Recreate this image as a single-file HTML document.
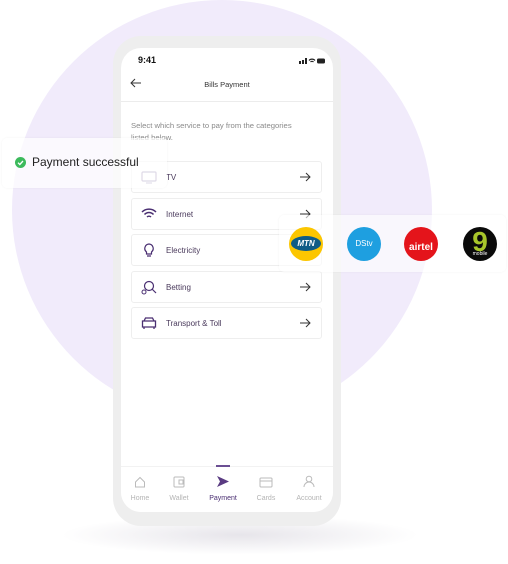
<!DOCTYPE html>
<html><head><style>
*{margin:0;padding:0;box-sizing:border-box}
body{width:508px;height:564px;background:#fff;position:relative;overflow:hidden;font-family:"Liberation Sans",sans-serif}
.abs{position:absolute}
.circle{left:12px;top:0;width:420px;height:420px;border-radius:50%;background:#f1ebfb}
.shadow{left:60px;top:515px;width:360px;height:40px;border-radius:50%;background:radial-gradient(ellipse,rgba(120,110,140,.18),rgba(255,255,255,0) 70%)}
.frame{left:113px;top:36px;width:228px;height:490px;border-radius:28px;background:#eeeeee}
.screen{left:121px;top:48px;width:212px;height:464px;border-radius:20px;background:#fff;overflow:hidden}
.row{position:absolute;left:10px;width:191px;height:32px;border:1px solid #eeeeee;border-radius:3px;background:#fff;font-size:8px;color:#4a3a5c}
.row span{position:absolute;left:34px;top:11px}
.row .ar{position:absolute;right:10px;top:9px}
.row .ic{position:absolute;left:9px;top:8px}
.nav{position:absolute;left:0;top:418px;width:212px;height:46px;background:#fff;border-top:1px solid #f2f2f2}
.nv{position:absolute;top:28px;font-size:7px;color:#b4b4b4;width:40px;text-align:center}
</style></head><body>
<div class="abs circle"></div>
<div class="abs shadow"></div>
<div class="abs frame"></div>
<div class="abs screen">
 <div class="abs" style="left:17px;top:7px;font-size:9px;font-weight:bold;color:#111">9:41</div>
 <svg class="abs" style="left:178px;top:9px" width="26" height="8"><rect x="0" y="4" width="2" height="3" fill="#222"/><rect x="3" y="3" width="2" height="4" fill="#222"/><rect x="6" y="1" width="2" height="6" fill="#222"/><path d="M10 3.5a4 4 0 0 1 6 0M11.5 5a2 2 0 0 1 3 0" stroke="#222" fill="none" stroke-width="1.2"/><rect x="18" y="1.5" width="8" height="5" rx="1.5" fill="#222"/></svg>
 <svg class="abs" style="left:9px;top:30px" width="12" height="10"><path d="M11 5H1M5 1L1 5l4 4" stroke="#333" fill="none" stroke-width="1"/></svg>
 <div class="abs" style="left:0;width:212px;top:32px;text-align:center;font-size:7.5px;color:#333">Bills Payment</div>
 <div class="abs" style="left:0;top:53px;width:212px;height:1px;background:#ececec"></div>
 <div class="abs" style="left:10px;top:72px;width:172px;font-size:7.7px;line-height:11.5px;color:#8a8a8a">Select which service to pay from the categories listed below.</div>
 <div class="row" style="top:113px"><svg class="ic" width="16" height="14"><rect x="1" y="2" width="14" height="9" rx="1" stroke="#8f80b0" fill="none" stroke-width="1.2"/><path d="M5 13h6" stroke="#8f80b0"/></svg><span>TV</span><svg class="ar" width="12" height="12"><path d="M1 6h10M7 2l4 4-4 4" stroke="#333" fill="none"/></svg></div>
 <div class="row" style="top:150px"><svg class="ic" width="16" height="14"><path d="M1 5a10 10 0 0 1 14 0M3.5 7.5a6 6 0 0 1 9 0M6 10a3 3 0 0 1 4 0" stroke="#4a2f72" fill="none" stroke-width="1.5"/></svg><span>Internet</span><svg class="ar" width="12" height="12"><path d="M1 6h10M7 2l4 4-4 4" stroke="#333" fill="none"/></svg></div>
 <div class="row" style="top:186px"><svg class="ic" width="16" height="14"><path d="M8 1a4.5 4.5 0 0 0-2.5 8v2h5V9A4.5 4.5 0 0 0 8 1zM6 13h4" stroke="#4a2f72" fill="none" stroke-width="1.2"/></svg><span>Electricity</span><svg class="ar" width="12" height="12"><path d="M1 6h10M7 2l4 4-4 4" stroke="#333" fill="none"/></svg></div>
 <div class="row" style="top:223px"><svg class="ic" width="16" height="16"><circle cx="8" cy="6" r="4.5" stroke="#4a2f72" fill="none" stroke-width="1.2"/><path d="M11 9l4 4" stroke="#4a2f72" stroke-width="1.2"/><circle cx="3" cy="12" r="2" stroke="#4a2f72" fill="none"/></svg><span>Betting</span><svg class="ar" width="12" height="12"><path d="M1 6h10M7 2l4 4-4 4" stroke="#333" fill="none"/></svg></div>
 <div class="row" style="top:259px"><svg class="ic" width="16" height="14"><path d="M3 5l1.5-3h7L13 5M1.5 5h13v6h-13zM3 11v2M13 11v2" stroke="#4a2f72" fill="none" stroke-width="1.3"/></svg><span>Transport &amp; Toll</span><svg class="ar" width="12" height="12"><path d="M1 6h10M7 2l4 4-4 4" stroke="#333" fill="none"/></svg></div>
 <div class="nav">
  <div class="abs" style="left:95px;top:-2px;width:14px;height:2px;background:#6b4f93"></div>
  <svg class="abs" style="left:13px;top:9px" width="12" height="12"><path d="M1.5 6L6 1.5 10.5 6v5h-9z" stroke="#bbb" fill="none"/></svg>
  <svg class="abs" style="left:52px;top:9px" width="12" height="12"><rect x="1" y="1" width="10" height="10" rx="1" stroke="#bbb" fill="none"/><rect x="6" y="4" width="4" height="4" stroke="#bbb" fill="none"/></svg>
  <svg class="abs" style="left:95px;top:8px" width="14" height="13"><path d="M1 1l12 5.5L1 12l3-5.5z" fill="#5a3b82"/></svg>
  <svg class="abs" style="left:138px;top:10px" width="14" height="11"><rect x="1" y="1" width="12" height="9" rx="1" stroke="#bbb" fill="none"/><path d="M1 4h12" stroke="#bbb"/></svg>
  <svg class="abs" style="left:182px;top:8px" width="12" height="13"><circle cx="6" cy="4" r="2.8" stroke="#bbb" fill="none"/><path d="M1 12a5 5 0 0 1 10 0" stroke="#bbb" fill="none"/></svg>
  <div class="nv" style="left:-1px">Home</div>
  <div class="nv" style="left:38px">Wallet</div>
  <div class="nv" style="left:82px;color:#4a2f72">Payment</div>
  <div class="nv" style="left:125px">Cards</div>
  <div class="nv" style="left:168px">Account</div>
 </div>
</div>
<div class="abs" style="left:2px;top:138px;width:165px;height:50px;background:rgba(255,255,255,.7);border-radius:5px;box-shadow:0 0 2px rgba(0,0,0,.05)">
 <svg class="abs" style="left:13px;top:19px" width="11" height="11"><circle cx="5.5" cy="5.5" r="5.5" fill="#3cba5c"/><path d="M3 5.7l1.8 1.8L8 4" stroke="#fff" fill="none" stroke-width="1.3"/></svg>
 <div class="abs" style="left:30px;top:17px;font-size:12px;color:#222">Payment successful</div>
</div>
<div class="abs" style="left:279px;top:215px;width:227px;height:57px;background:rgba(255,255,255,.6);border-radius:5px;box-shadow:0 0 2px rgba(0,0,0,.05)"></div>
<div class="abs" style="left:289px;top:227px;width:34px;height:34px;border-radius:50%;background:#fcc600"></div>
<div class="abs" style="left:291px;top:236px;width:30px;height:15px;border-radius:50%;background:#0f5c86;color:#fff;font-size:8px;font-weight:bold;font-style:italic;text-align:center;line-height:15px">MTN</div>
<div class="abs" style="left:347px;top:227px;width:34px;height:34px;border-radius:50%;background:#1e9fe0;color:#fff;font-size:8px;text-align:center;line-height:34px">DStv</div>
<div class="abs" style="left:404px;top:227px;width:34px;height:34px;border-radius:50%;background:#e4141b;color:#fff;font-size:10px;font-weight:bold;text-align:center;padding-top:15px">airtel</div>
<div class="abs" style="left:463px;top:227px;width:34px;height:34px;border-radius:50%;background:#0a0a0a;color:#a8c62a;font-size:28px;font-weight:bold;text-align:center;line-height:30px">9</div>
<div class="abs" style="left:463px;top:251px;width:34px;text-align:center;font-size:5px;color:#fff">mobile</div>
</body></html>
